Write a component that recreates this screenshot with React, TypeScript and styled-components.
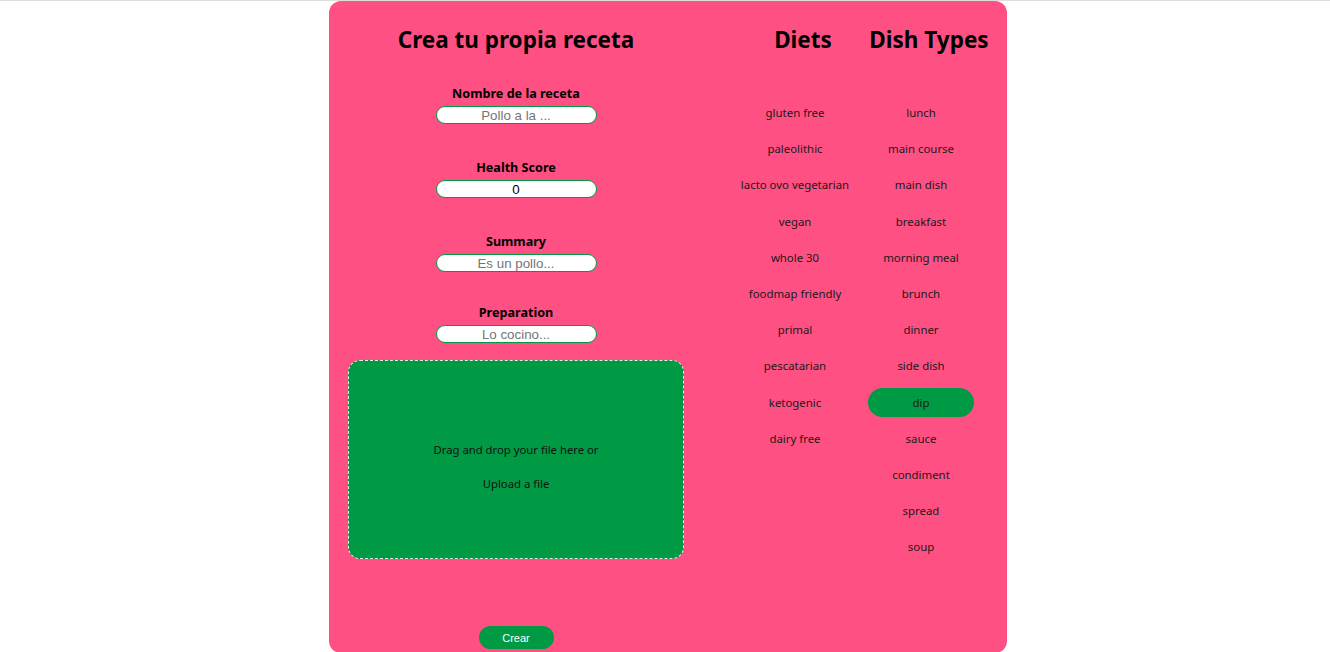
import React from "react";
import styled, { createGlobalStyle } from "styled-components";

const PINK = "#ff5083";
const GREEN = "#009944";

const Global = createGlobalStyle`
  html, body { margin: 0; padding: 0; background: #fff; }
  body { font-family: "Noto Sans", "Open Sans", sans-serif; color: #000; overflow: hidden; }
`;

const Page = styled.div`
  border-top: 1px solid #dedede;
  display: flex;
  justify-content: center;
  padding-left: 6px;
  height: 651px;
  overflow: hidden;
`;

const Panel = styled.div`
  width: 678px;
  height: 652px;
  flex-shrink: 0;
  background: ${PINK};
  border-radius: 12px;
  display: flex;
  align-items: flex-start;
`;

const FormColumn = styled.form`
  width: 374px;
  display: flex;
  flex-direction: column;
  align-items: center;
  padding-top: 24px;
`;

const Title = styled.h1`
  margin: 0;
  font-size: 22.5px;
  line-height: 30px;
  font-weight: 700;
  white-space: nowrap;
`;

const Fields = styled.div`
  display: flex;
  flex-direction: column;
  align-items: center;
  margin-top: 30px;
`;

const Field = styled.div<{ $space: number }>`
  display: flex;
  flex-direction: column;
  align-items: center;
  margin-top: ${(p) => p.$space}px;
`;

const Label = styled.label`
  font-size: 12.6px;
  line-height: 18px;
  font-weight: 700;
  margin-bottom: 3px;
`;

const Input = styled.input`
  box-sizing: border-box;
  width: 161px;
  height: 18px;
  border: 1px solid ${GREEN};
  border-radius: 9px;
  background: #fff;
  padding: 0 6px;
  font-family: "Liberation Sans", Arial, sans-serif;
  font-size: 13.33px;
  text-align: center;
  color: #000;
  outline: none;
  &::placeholder { color: #757575; }
`;

const DropZone = styled.div`
  box-sizing: border-box;
  margin-top: 17px;
  width: 336px;
  height: 199px;
  background: ${GREEN};
  border: 1px dashed #e8e8e8;
  border-radius: 12px;
  display: flex;
  flex-direction: column;
  align-items: center;
  justify-content: center;
  gap: 17px;
  font-size: 11.3px;
  line-height: 17px;
  color: #111;
  padding-top: 14px;
`;

const DropText = styled.p`
  margin: 0;
`;

const SubmitButton = styled.button`
  margin-top: 67px;
  width: 75px;
  height: 23px;
  border: none;
  border-radius: 12px;
  background: ${GREEN};
  color: #fff;
  font-family: "Liberation Sans", Arial, sans-serif;
  font-size: 11px;
  padding: 0;
`;

const ListColumn = styled.div<{ $first?: boolean }>`
  width: 126px;
  margin-left: ${(p) => (p.$first ? "29px" : "0")};
  padding-top: 24px;
  display: flex;
  flex-direction: column;
  align-items: center;
`;

const Heading = styled.h2`
  margin: 0;
  padding-left: 16px;
  font-size: 22.5px;
  line-height: 30px;
  font-weight: 700;
  white-space: nowrap;
`;

const OptionList = styled.ul`
  list-style: none;
  margin: 43px 0 0;
  padding: 0;
  display: flex;
  flex-direction: column;
  align-items: center;
  gap: 7.2px;
`;

const Option = styled.li<{ $selected?: boolean }>`
  width: 106px;
  height: 29px;
  border-radius: 14.5px;
  display: flex;
  align-items: center;
  justify-content: center;
  white-space: nowrap;
  font-size: 11.4px;
  color: #1a1a1a;
  background: ${(p) => (p.$selected ? GREEN : "transparent")};
`;

const diets = [
  "gluten free",
  "paleolithic",
  "lacto ovo vegetarian",
  "vegan",
  "whole 30",
  "foodmap friendly",
  "primal",
  "pescatarian",
  "ketogenic",
  "dairy free",
];

const dishTypes = [
  "lunch",
  "main course",
  "main dish",
  "breakfast",
  "morning meal",
  "brunch",
  "dinner",
  "side dish",
  "dip",
  "sauce",
  "condiment",
  "spread",
  "soup",
];

const fields = [
  { label: "Nombre de la receta", placeholder: "Pollo a la ...", space: 0 },
  { label: "Health Score", value: "0", space: 35 },
  { label: "Summary", placeholder: "Es un pollo...", space: 35 },
  { label: "Preparation", placeholder: "Lo cocino...", space: 32 },
];

export default function App() {
  return (
    <>
      <Global />
      <Page>
        <Panel>
          <FormColumn onSubmit={(e) => e.preventDefault()}>
            <Title>Crea tu propia receta</Title>
            <Fields>
              {fields.map((f) => (
                <Field key={f.label} $space={f.space}>
                  <Label>{f.label}</Label>
                  <Input placeholder={f.placeholder} defaultValue={f.value} />
                </Field>
              ))}
            </Fields>
            <DropZone>
              <DropText>Drag and drop your file here or</DropText>
              <DropText>Upload a file</DropText>
            </DropZone>
            <SubmitButton type="submit">Crear</SubmitButton>
          </FormColumn>
          <ListColumn $first>
            <Heading>Diets</Heading>
            <OptionList>
              {diets.map((d) => (
                <Option key={d}>{d}</Option>
              ))}
            </OptionList>
          </ListColumn>
          <ListColumn>
            <Heading>Dish Types</Heading>
            <OptionList>
              {dishTypes.map((d) => (
                <Option key={d} $selected={d === "dip"}>
                  {d}
                </Option>
              ))}
            </OptionList>
          </ListColumn>
        </Panel>
      </Page>
    </>
  );
}
